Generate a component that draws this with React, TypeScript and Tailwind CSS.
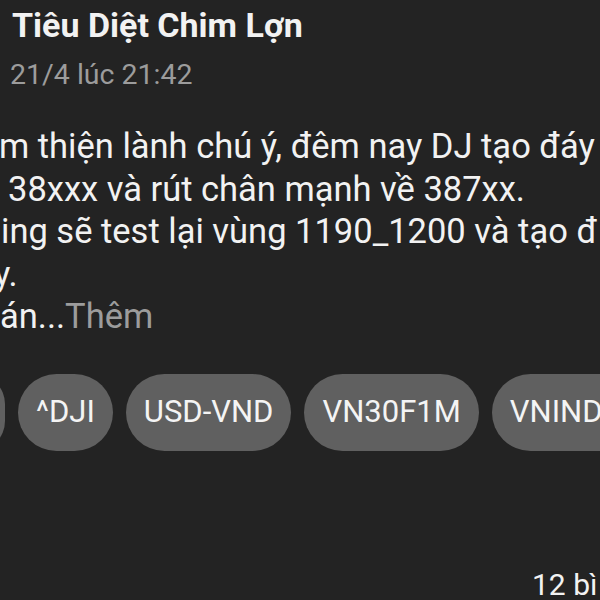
const chips = ['^DJI', 'USD-VND', 'VN30F1M', 'VNINDEX'];

export default function App() {
  return (
    <div className="w-[600px] h-[600px] overflow-hidden bg-[#232323] font-['Roboto',sans-serif] text-[#f2f2f2]">
      {/* header */}
      <div className="pl-[12px] pt-[6px]">
        <div className="text-[34px] leading-[38px] font-bold whitespace-nowrap">Tiêu Diệt Chim Lợn</div>
        <div className="mt-[16px] -ml-[2px] text-[28.5px] leading-[30px] text-[#9c9c9c] whitespace-nowrap">
          21/4 lúc 21:42
        </div>
      </div>

      {/* post body, cut at both edges */}
      <div className="mt-[35px] text-[34.5px] leading-[42.5px] whitespace-nowrap">
        <div className="-ml-[1px]">m thiện lành chú ý, đêm nay DJ tạo đáy</div>
        <div className="ml-[8px]">38xxx và rút chân mạnh về 387xx.</div>
        <div className="ml-[1px]">ing sẽ test lại vùng 1190_1200 và tạo đ</div>
        <div className="-ml-[6px]">y.</div>
        <div>
          án...<span className="text-[#9c9c9c]">Thêm</span>
        </div>
      </div>

      {/* ticker chips */}
      <div className="mt-[36px] -ml-[55px] flex gap-[13px] whitespace-nowrap">
        <div className="w-[60px] h-[77px] shrink-0 rounded-full bg-[#606060]" />
        {chips.map((c) => (
          <div
            key={c}
            className="h-[77px] shrink-0 px-[18px] flex items-center rounded-full bg-[#606060] text-[31px] text-[#f4f4f4]"
          >
            {c}
          </div>
        ))}
      </div>

      <div className="mt-[116px] ml-[532px] text-[30px] leading-[36px] whitespace-nowrap">12 bì</div>
    </div>
  );
}
